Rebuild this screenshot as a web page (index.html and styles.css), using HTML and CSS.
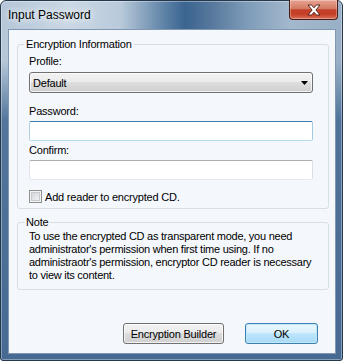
FILE: index.html
```html
<!DOCTYPE html>
<html>
<head>
<meta charset="utf-8">
<title>Input Password</title>
<link rel="stylesheet" href="styles.css">
</head>
<body>
<div class="window">
  <div class="titlebar">
    <span class="title">Input Password</span>
    <div class="close">
      <svg width="14" height="12" viewBox="-1 -1 14 12"><path d="M0 0H3.6L6 2.8L8.4 0H12L7.9 5L12 10H8.4L6 7.2L3.6 10H0L4.1 5Z" fill="#fff" stroke="#4a1a10" stroke-width="0.9" stroke-linejoin="round"/></svg>
    </div>
  </div>
  <div class="client">
    <fieldset class="group">
      <legend>Encryption Information</legend>
      <div class="body">
        <label class="lbl">Profile:</label>
        <div class="combo"><span>Default</span><svg width="7" height="4" viewBox="0 0 7 4"><path d="M0 0H7L3.5 4Z" fill="#000"/></svg></div>
        <label class="lbl lbl-pass">Password:</label>
        <input class="field focused" type="password">
        <label class="lbl lbl-confirm">Confirm:</label>
        <input class="field" type="password">
        <label class="check"><span class="box"></span>Add reader to encrypted CD.</label>
      </div>
    </fieldset>
    <fieldset class="group note">
      <legend>Note</legend>
      <div class="body">
        <p>To use the encrypted CD as transparent mode, you need<br>administrator's permission when first time using. If no<br>administraotr's permission, encryptor CD reader is necessary<br>to view its content.</p>
      </div>
    </fieldset>
    <div class="buttons">
      <button class="btn builder">Encryption Builder</button>
      <button class="btn ok">OK</button>
    </div>
  </div>
</div>
</body>
</html>
```

FILE: styles.css
```css
* { box-sizing: border-box; }
html, body { margin: 0; padding: 0; }
body {
  width: 343px;
  height: 361px;
  overflow: hidden;
  font-family: "Liberation Sans", Arial, sans-serif;
  font-size: 11px;
  letter-spacing: -0.2px;
  color: #000;
  background: #fff;
}
.window {
  width: 343px;
  height: 361px;
  display: flex;
  flex-direction: column;
  border: 1px solid #25384c;
  border-radius: 6px 6px 3px 3px;
  background:
    linear-gradient(to bottom, rgba(72,108,148,0) 0px, rgba(72,108,148,0) 60px, rgba(72,108,148,0.9) 120px, rgba(70,106,146,1) 100%),
    linear-gradient(to right, #b4c6d8 0%, #cbd8e5 20%, #b9cadb 35%, #5d82a6 48%, #3b6490 54%, #58799d 62%, #7d9bb8 72%, #a4b9cd 85%, #98afc5 100%);
  box-shadow: inset 0 0 0 1px rgba(255,255,255,0.35);
}
.titlebar {
  flex: none;
  height: 28px;
  display: flex;
  justify-content: space-between;
  align-items: flex-start;
  padding: 0 4px 0 7px;
}
.title {
  font-size: 12px;
  line-height: 14px;
  margin-top: 7px;
  letter-spacing: 0;
  text-shadow: 0 0 6px #fff, 0 0 10px rgba(255,255,255,0.8);
}
.close {
  width: 49px;
  height: 20px;
  margin-top: -1px;
  border: 1px solid #4a1d14;
  border-top: none;
  border-radius: 0 0 4px 4px;
  background: linear-gradient(#e8a493 0%, #d47a63 45%, #c3402a 52%, #c53f26 75%, #d9715a 100%);
  box-shadow: inset 0 0 0 1px rgba(255,255,255,0.3);
  display: flex;
  align-items: center;
  justify-content: center;
}
.client {
  flex: 1;
  margin: 0 6px 6px 7px;
  border: 1px solid #7f97b0;
  background: #f4f7fc;
  display: flex;
  flex-direction: column;
  padding: 7px 6px 9px 8px;
}
.group {
  margin: 0;
  padding: 3px 0 4px 0;
  border: 1px solid #d5dfe5;
  border-radius: 3px;
  min-width: 0;
}
.group legend {
  padding: 0 2px;
  margin-left: 6px;
  line-height: 14px;
}
.group .body {
  padding: 0 15px 0 11px;
}
.lbl {
  display: block;
  line-height: 14px;
}
.lbl-pass { margin-top: 11px; }
.lbl-confirm { margin-top: 2px; }
.combo {
  margin-top: 4px;
  height: 21px;
  border: 1px solid #707070;
  border-radius: 3px;
  background: linear-gradient(#f2f2f2 0%, #ebebeb 49%, #dddddd 50%, #cfcfcf 100%);
  box-shadow: inset 0 0 0 1px rgba(255,255,255,0.7);
  display: flex;
  align-items: center;
  justify-content: space-between;
  padding: 0 4px 0 3px;
}
.combo svg { display: block; }
.field {
  display: block;
  width: 100%;
  height: 20px;
  margin: 3px 0 0 0;
  border: 1px solid;
  border-color: #abadb3 #dbdfe6 #e3e9ef #e2e3ea;
  border-radius: 2px;
  background: #fff;
  padding: 0;
  outline: none;
  font: inherit;
}
.field.focused {
  border-color: #3d7bad #a4c9e3 #b7d9ed #b5cfe7;
}
.check {
  display: flex;
  align-items: center;
  height: 15px;
  margin-top: 9px;
}
.box {
  width: 13px;
  height: 13px;
  margin-right: 3px;
  border: 1px solid #8e8f8f;
  background: linear-gradient(135deg, #c9cdd2 0%, #e6e7e9 60%, #f7f7f7 100%);
  box-shadow: inset 0 0 0 1px #f4f4f4, inset 0 0 0 2px #c6c9cd;
}
.note {
  margin-top: 6px;
  padding: 0;
}
.note .body {
  padding: 1px 15px 7px 11px;
}
.note p {
  margin: 0;
  line-height: 13px;
  white-space: nowrap;
  letter-spacing: -0.25px;
}
.buttons {
  margin-top: auto;
  margin-right: 11px;
  display: flex;
  justify-content: flex-end;
  gap: 21px;
}
.btn {
  height: 21px;
  padding: 0;
  border: 1px solid #707070;
  border-radius: 3px;
  background: linear-gradient(#f2f2f2 0%, #ebebeb 49%, #dddddd 50%, #cfcfcf 100%);
  box-shadow: inset 0 0 0 1px rgba(255,255,255,0.75);
  font: inherit;
  letter-spacing: -0.2px;
  color: #000;
}
.builder { width: 101px; }
.ok {
  width: 73px;
  border-color: #3c7fb1;
  background: linear-gradient(#eaf6fd 0%, #d9f0fc 49%, #bee6fd 50%, #a7d9f5 100%);
  box-shadow: inset 0 0 0 1px #c4e8fb;
}
```
